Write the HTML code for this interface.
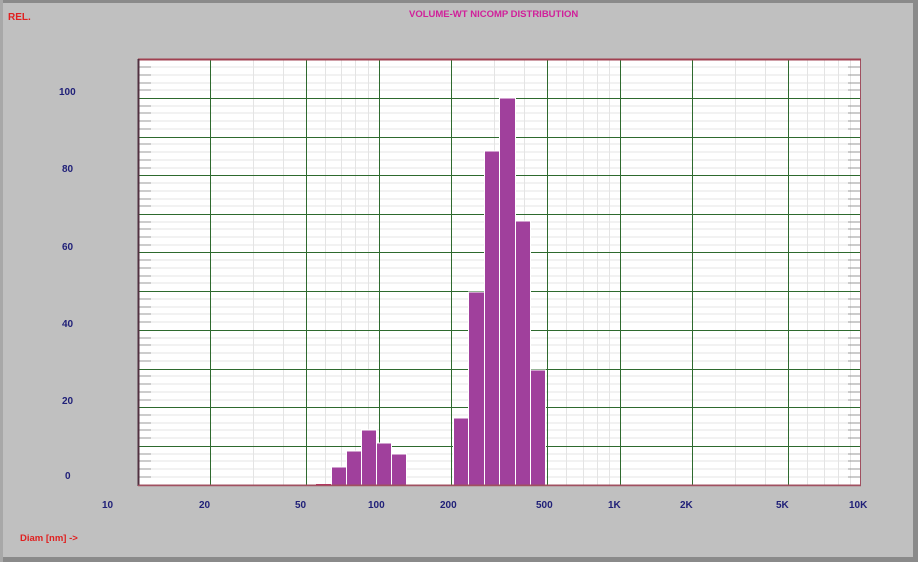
<!DOCTYPE html>
<html><head><style>
html,body{margin:0;padding:0;}
body{width:918px;height:562px;background:#c0c0c0;position:relative;overflow:hidden;font-family:"Liberation Sans",sans-serif;}
.t{position:absolute;font-size:10px;font-weight:bold;}
</style></head><body>
<div style="position:absolute;left:0;top:0;width:918px;height:3px;background:#8a8a8a"></div>
<div style="position:absolute;left:913px;top:0;width:5px;height:562px;background:#8a8a8a"></div>
<div style="position:absolute;left:0;top:557px;width:918px;height:5px;background:#8a8a8a"></div>
<div style="position:absolute;left:0;top:0;width:3px;height:562px;background:#a8a8a8"></div>
<div class="t" style="left:8px;top:12px;color:#e02020">REL.</div>
<div class="t" style="left:409px;top:9px;color:#d0209a;font-size:9.5px">VOLUME-WT NICOMP DISTRIBUTION</div>
<div class="t" style="left:20px;top:533px;color:#e02020;font-size:9.5px">Diam [nm] -&gt;</div>
<div class="t" style="left:59px;top:87px;color:#202078">100</div>
<div class="t" style="left:62px;top:164px;color:#202078">80</div>
<div class="t" style="left:62px;top:242px;color:#202078">60</div>
<div class="t" style="left:62px;top:319px;color:#202078">40</div>
<div class="t" style="left:62px;top:396px;color:#202078">20</div>
<div class="t" style="left:65px;top:471px;color:#202078">0</div>
<div class="t" style="left:102px;top:500px;color:#202078">10</div>
<div class="t" style="left:199px;top:500px;color:#202078">20</div>
<div class="t" style="left:295px;top:500px;color:#202078">50</div>
<div class="t" style="left:368px;top:500px;color:#202078">100</div>
<div class="t" style="left:440px;top:500px;color:#202078">200</div>
<div class="t" style="left:536px;top:500px;color:#202078">500</div>
<div class="t" style="left:608px;top:500px;color:#202078">1K</div>
<div class="t" style="left:680px;top:500px;color:#202078">2K</div>
<div class="t" style="left:776px;top:500px;color:#202078">5K</div>
<div class="t" style="left:849px;top:500px;color:#202078">10K</div>
<svg style="position:absolute;left:0;top:0" width="918" height="562">
<rect x="138" y="59" width="723" height="426" fill="#fff"/>
<g stroke="#e4e4e4" stroke-width="1">
<path d="M138 67H861M138 75H861M138 83H861M138 90H861M138 106H861M138 113H861M138 121H861M138 129H861M138 144H861M138 152H861M138 160H861M138 168H861M138 183H861M138 191H861M138 199H861M138 206H861M138 222H861M138 229H861M138 237H861M138 245H861M138 260H861M138 268H861M138 276H861M138 283H861M138 299H861M138 307H861M138 314H861M138 322H861M138 338H861M138 345H861M138 353H861M138 361H861M138 376H861M138 384H861M138 392H861M138 400H861M138 415H861M138 423H861M138 430H861M138 438H861M138 454H861M138 461H861M138 469H861M138 477H861"/>
<path d="M253.5 59V485M283.5 59V485M325.5 59V485M341.5 59V485M355.5 59V485M368.5 59V485M494.5 59V485M524.5 59V485M566.5 59V485M583.5 59V485M597.5 59V485M609.5 59V485M735.5 59V485M765.5 59V485M807.5 59V485M824.5 59V485M838.5 59V485M850.5 59V485"/>
</g>
<g stroke="#2e6a2e" stroke-width="1">
<path d="M138 98.5H861M138 137.5H861M138 175.5H861M138 214.5H861M138 252.5H861M138 291.5H861M138 330.5H861M138 369.5H861M138 407.5H861M138 446.5H861"/>
<path d="M210.5 59V485M306.5 59V485M379.5 59V485M451.5 59V485M547.5 59V485M620.5 59V485M692.5 59V485M788.5 59V485"/>
</g>
<g stroke="#999" stroke-width="1">
<path d="M139 67h12M139 75h12M139 83h12M139 90h12M139 106h12M139 113h12M139 121h12M139 129h12M139 144h12M139 152h12M139 160h12M139 168h12M139 183h12M139 191h12M139 199h12M139 206h12M139 222h12M139 229h12M139 237h12M139 245h12M139 260h12M139 268h12M139 276h12M139 283h12M139 299h12M139 307h12M139 314h12M139 322h12M139 338h12M139 345h12M139 353h12M139 361h12M139 376h12M139 384h12M139 392h12M139 400h12M139 415h12M139 423h12M139 430h12M139 438h12M139 454h12M139 461h12M139 469h12M139 477h12"/>
<path d="M848 67h12M848 75h12M848 83h12M848 90h12M848 106h12M848 113h12M848 121h12M848 129h12M848 144h12M848 152h12M848 160h12M848 168h12M848 183h12M848 191h12M848 199h12M848 206h12M848 222h12M848 229h12M848 237h12M848 245h12M848 260h12M848 268h12M848 276h12M848 283h12M848 299h12M848 307h12M848 314h12M848 322h12M848 338h12M848 345h12M848 353h12M848 361h12M848 376h12M848 384h12M848 392h12M848 400h12M848 415h12M848 423h12M848 430h12M848 438h12M848 454h12M848 461h12M848 469h12M848 477h12"/>
</g>
<g fill="#a0409c" stroke="#fff" stroke-width="1">
<rect x="331.5" y="467" width="15" height="18"/>
<rect x="346.5" y="451" width="15" height="34"/>
<rect x="361.5" y="430" width="15" height="55"/>
<rect x="376.5" y="443" width="15" height="42"/>
<rect x="391.5" y="454" width="15" height="31"/>
<rect x="453.5" y="418" width="15" height="67"/>
<rect x="468.5" y="292" width="16" height="193"/>
<rect x="484.5" y="151" width="15" height="334"/>
<rect x="499.5" y="98" width="16" height="387"/>
<rect x="515.5" y="221" width="15" height="264"/>
<rect x="530.5" y="370" width="15" height="115"/>
</g>
<path d="M316 484.5h15" stroke="#c02060" stroke-width="1"/>
<rect x="138.5" y="59.5" width="722" height="425.5" fill="none" stroke="#a05060" stroke-width="1"/>
<path d="M138 59.5H861" stroke="#a04050" stroke-width="2"/>
<path d="M138.5 59V486" stroke="#503040" stroke-width="2"/>
<path d="M138 485.5H861" stroke="#a05060" stroke-width="1.5"/>
</svg>
</body></html>
